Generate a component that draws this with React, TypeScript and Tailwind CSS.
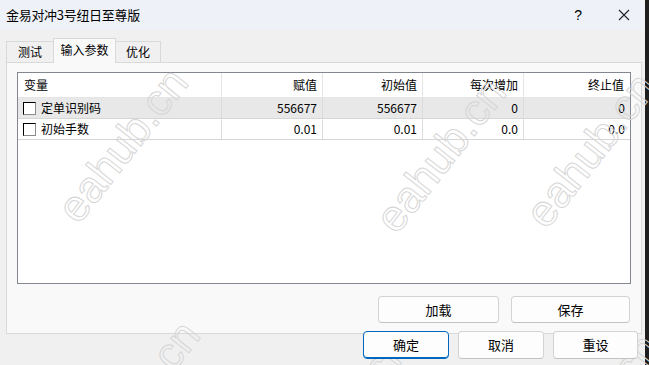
import React from "react";

const FONT = { fontFamily: '"Noto Sans CJK SC", "Microsoft YaHei", sans-serif' };

function Check() {
  return (
    <span className="inline-block w-[13px] h-[13px] border border-black border-r-[#8a8a8a] border-b-[#8a8a8a] bg-white shrink-0" />
  );
}

const rows = [
  { name: "定单识别码", v: "556677", s: "556677", step: "0", stop: "0", sel: true },
  { name: "初始手数", v: "0.01", s: "0.01", step: "0.0", stop: "0.0", sel: false },
];

function Btn({ children, w, primary }: { children: React.ReactNode; w: string; primary?: boolean }) {
  return (
    <div
      className={`${w} h-full flex items-center justify-center rounded-[4px] bg-[#fdfdfd] text-[13px] text-black border ${
        primary ? "border-[#0067c0] shadow-[inset_0_-1px_0_#0067c0]" : "border-[#d3d3d3] border-b-[#c2c2c2]"
      }`}
    >
      {children}
    </div>
  );
}

function Watermark({ x, y }: { x: number; y: number }) {
  return (
    <div
      aria-hidden="true"
      className="absolute pointer-events-none select-none text-[44px] leading-[50px] text-transparent [-webkit-text-stroke:1px_#d6d6d6] -rotate-[52deg] whitespace-nowrap"
      style={{ left: x, top: y, fontFamily: '"Liberation Sans", sans-serif' }}
    >
      eahub.cn
    </div>
  );
}

export default function App() {
  return (
    <div className="w-[649px] h-[365px] flex overflow-hidden relative bg-[#1e1e1e]" style={FONT}>
      <div className="w-[645px] h-full flex flex-col bg-[#f0f0f0] text-black">
        {/* Title bar */}
        <div className="h-[30px] shrink-0 flex items-center bg-[#eef2f8] pl-[6px] rounded-tr-[6px]">
          <span className="text-[13px] tracking-[-0.3px]">金易对冲3号纽日至尊版</span>
          <span className="ml-auto text-[14px] mr-[36px]" style={{ fontFamily: '"Liberation Sans", sans-serif' }}>?</span>
          <svg width="12" height="12" viewBox="0 0 12 12" className="mr-[15px]">
            <path d="M1 1 L11 11 M11 1 L1 11" stroke="#222" strokeWidth="1.1" />
          </svg>
        </div>

        {/* Tabs */}
        <div className="h-[32px] shrink-0 flex items-end pl-[6px] pt-[8px]">
          <div className="w-[47px] h-[21px] border-t border-l border-[#d9d9d9] bg-[#f0f0f0] flex items-center justify-center text-[12px]">
            测试
          </div>
          <div className="w-[63px] h-[25px] border-t border-l border-r border-[#d9d9d9] bg-[#f9f9f9] -mb-px relative z-10 flex items-center justify-center text-[12px] pb-[2px]">
            输入参数
          </div>
          <div className="w-[45px] h-[21px] border-t border-r border-[#d9d9d9] bg-[#f0f0f0] flex items-center justify-center text-[12px]">
            优化
          </div>
        </div>

        {/* Panel */}
        <div className="ml-[6px] w-[636px] h-[272px] shrink-0 border border-[#d9d9d9] bg-[#f9f9f9] flex flex-col pt-[9px] pl-[10px]">
          <div className="w-[614px] h-[212px] border border-[#828790] bg-white flex flex-col text-[12px]">
            <div className="grid grid-cols-[204px_101px_100px_101px_1fr] h-[25px] border-b border-[#e5e5e5]">
              <div className="border-r border-[#e5e5e5] flex items-center pl-[6px]">变量</div>
              <div className="border-r border-[#e5e5e5] flex items-center justify-end pr-[5px]">赋值</div>
              <div className="border-r border-[#e5e5e5] flex items-center justify-end pr-[5px]">初始值</div>
              <div className="border-r border-[#e5e5e5] flex items-center justify-end pr-[5px]">每次增加</div>
              <div className="flex items-center justify-end pr-[6px]">终止值</div>
            </div>
            {rows.map((r) => (
              <div
                key={r.name}
                className={`grid grid-cols-[204px_101px_100px_101px_1fr] h-[21px] border-b border-[#d6d6d6] ${
                  r.sel ? "bg-[#e8e8e8]" : "bg-white"
                }`}
              >
                <div className="border-r border-[#dcdcdc] flex items-center pl-[5px] gap-[5px]">
                  <Check />
                  <span>{r.name}</span>
                </div>
                <div className="border-r border-[#dcdcdc] flex items-center justify-end pr-[5px]">{r.v}</div>
                <div className="border-r border-[#dcdcdc] flex items-center justify-end pr-[5px]">{r.s}</div>
                <div className="border-r border-[#dcdcdc] flex items-center justify-end pr-[5px]">{r.step}</div>
                <div className="flex items-center justify-end pr-[5px]">{r.stop}</div>
              </div>
            ))}
          </div>
          <div className="h-[27px] mt-[12px] flex justify-end gap-[12px] pr-[11px]">
            <Btn w="w-[121px]">加载</Btn>
            <Btn w="w-[119px]">保存</Btn>
          </div>
        </div>

        {/* Bottom buttons */}
        <div className="h-[28px] -mt-[3px] relative z-10 flex justify-end gap-[9px] pr-[7px]">
          <Btn w="w-[86px]" primary>确定</Btn>
          <Btn w="w-[86px]">取消</Btn>
          <Btn w="w-[85px]">重设</Btn>
        </div>
      </div>
      <div className="flex-1" />

      <Watermark x={32} y={120} />
      <Watermark x={350} y={130} />
      <Watermark x={500} y={125} />
      <Watermark x={44} y={373} />
      <Watermark x={254} y={386} />
      <Watermark x={504} y={386} />
    </div>
  );
}
